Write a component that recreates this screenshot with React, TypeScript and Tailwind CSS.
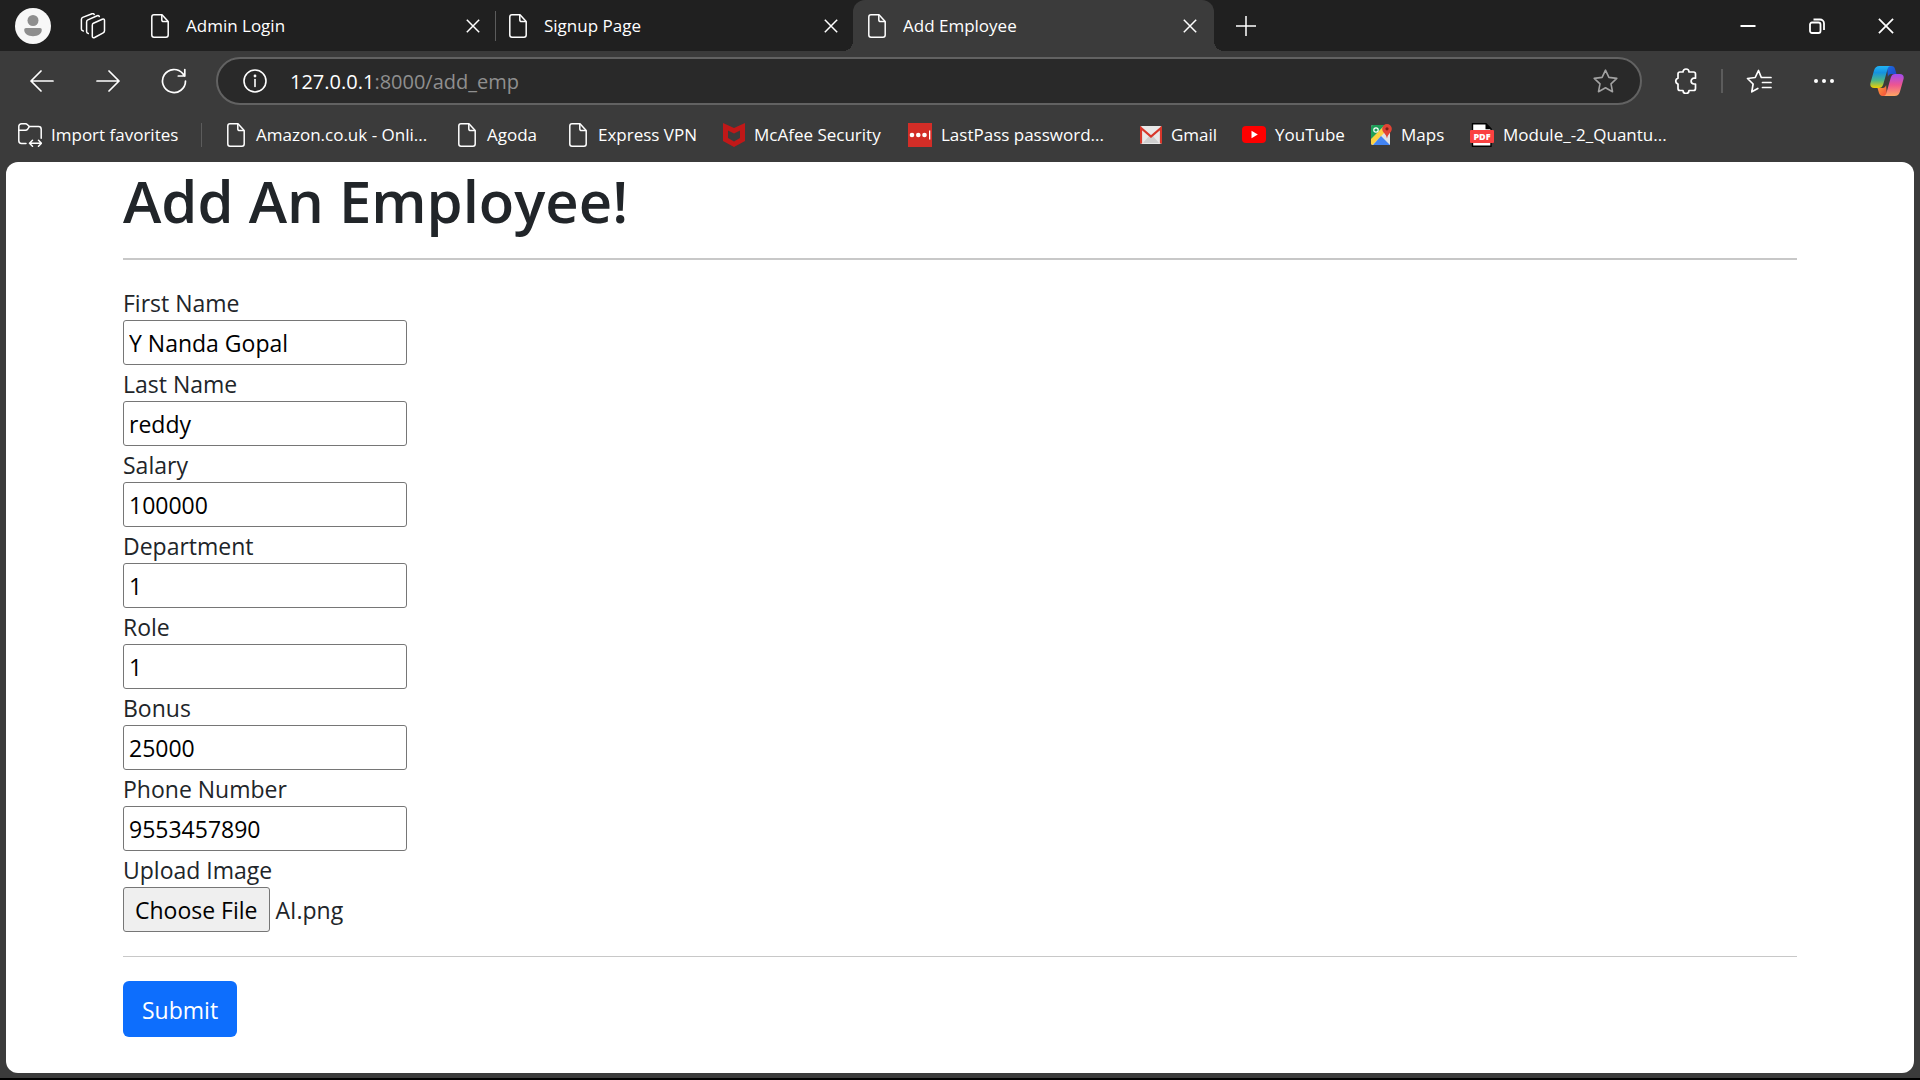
import { useEffect, useRef, useState, type ReactNode } from "react";

function PageIcon() {
  return (
    <svg width="18" height="24" viewBox="0 0 18 24" fill="none" stroke="#fff" strokeWidth="1.5" className="shrink-0" aria-hidden="true">
      <path d="M11 .8H3A2.2 2.2 0 0 0 .8 3v18A2.2 2.2 0 0 0 3 23.2h12a2.2 2.2 0 0 0 2.2-2.2V7.4z" strokeLinejoin="round" />
      <path d="M10.8 1v5a1.6 1.6 0 0 0 1.6 1.6h4.6" />
    </svg>
  );
}

function CloseIcon({ size = 14 }: { size?: number }) {
  return (
    <svg width={size} height={size} viewBox="0 0 14 14" stroke="#fff" strokeWidth="1.5" aria-hidden="true">
      <path d="M.8.8l12.4 12.4M13.2.8L.8 13.2" />
    </svg>
  );
}

function CopilotIcon() {
  return (
    <svg width="34" height="30" viewBox="0 0 34 30" aria-hidden="true">
      <defs>
        <linearGradient id="cpA" x1="0" y1="0" x2="0" y2="1">
          <stop offset="0" stopColor="#22b4f5" />
          <stop offset=".3" stopColor="#1592e0" />
          <stop offset=".65" stopColor="#4bb58a" />
          <stop offset="1" stopColor="#f2cf00" />
        </linearGradient>
        <linearGradient id="cpB" x1="0" y1="0" x2="0" y2="1">
          <stop offset="0" stopColor="#a04bf0" />
          <stop offset=".5" stopColor="#ee5590" />
          <stop offset="1" stopColor="#ffa763" />
        </linearGradient>
        <linearGradient id="cpC" x1="0" y1="0" x2="1" y2="1">
          <stop offset="0" stopColor="#1f6de0" />
          <stop offset="1" stopColor="#1a45c8" />
        </linearGradient>
        <linearGradient id="cpD" x1="0" y1="0" x2="1" y2="1">
          <stop offset="0" stopColor="#ffa03c" />
          <stop offset="1" stopColor="#f24a3a" />
        </linearGradient>
      </defs>
      <path d="M17 0h4.500c2 0 3 1.200 3.600 3.200L26.500 8h-5c-2 0-3 1-3.600 3z" fill="url(#cpC)" />
      <path d="M17 30h-4.500c-2 0-3-1.200-3.600-3.200L7.500 22h5c2 0 3-1 3.600-3z" fill="url(#cpD)" />
      <path d="M9.500 0H21c-2 0-2.800 1.200-3.400 3l-4.400 15.500C12.400 21 11 22 9 22H4.200C1 22-.4 20 .6 16.500L4 4.500C4.900 1.500 6.500 0 9.500 0z" fill="url(#cpA)" />
      <path d="M24.500 30H13c2 0 2.800-1.200 3.400-3l4.400-15.500C21.600 9 23 8 25 8h4.800c3.200 0 4.600 2 3.600 5.500L30 25.500c-.9 3-2.500 4.500-5.500 4.500z" fill="url(#cpB)" />
    </svg>
  );
}

function Tab({ title, active = false }: { title: string; active?: boolean }) {
  return (
    <div
      className={
        active
          ? "relative flex h-full w-[361px] items-center rounded-t-xl bg-[#3b3b3b] pr-4 pl-[15px]"
          : "relative flex h-full w-[357px] items-center pr-[14px] pl-[13px]"
      }
    >
      {active && (
        <>
          <span className="absolute bottom-0 -left-2.5 size-2.5 bg-[radial-gradient(circle_at_0_0,transparent_10px,#3b3b3b_10px)]" />
          <span className="absolute -right-2.5 bottom-0 size-2.5 bg-[radial-gradient(circle_at_100%_0,transparent_10px,#3b3b3b_10px)]" />
        </>
      )}
      <PageIcon />
      <span className="ml-[17px] flex-1 truncate text-[17px] leading-6">{title}</span>
      <button type="button" aria-label={`Close ${title}`} className="flex size-4 items-center justify-center">
        <CloseIcon />
      </button>
    </div>
  );
}

function Favorite({ icon, label, width }: { icon?: ReactNode; label: string; width: string }) {
  return (
    <a href="#" className={`flex h-8 shrink-0 items-center whitespace-nowrap ${width} ${icon ? "gap-[9px]" : "gap-[11px]"}`}>
      {icon ?? <PageIcon />}
      <span>{label}</span>
    </a>
  );
}

const mcafee = (
  <svg width="22" height="24" viewBox="0 0 22 24" className="shrink-0" aria-hidden="true">
    <path d="M0 0l11 5L22 0v18l-11 6-11-6zM5 7.500V15l6 3.500 6-3.500V7.500l-6 3z" fill="#c01818" fillRule="evenodd" />
  </svg>
);

const lastpass = (
  <svg width="24" height="24" viewBox="0 0 24 24" className="shrink-0" aria-hidden="true">
    <path d="M0 0h24v24H0z" fill="#d32d27" />
    <g fill="#fff">
      <circle cx="4" cy="12" r="2.300" />
      <circle cx="10.300" cy="12" r="2.300" />
      <circle cx="16.500" cy="12" r="2.300" />
      <path d="M21 7.500h1.300v9H21z" />
    </g>
  </svg>
);

const gmail = (
  <svg width="22" height="18" viewBox="0 0 22 18" className="shrink-0" aria-hidden="true">
    <rect width="22" height="18" rx="2" fill="#e8e8e8" />
    <path d="M3 17l6-7h4l6 7z" fill="#cfcfcf" />
    <path d="M1 17.500V2L11 10.500 21 2v15.500" fill="none" stroke="#d8372b" strokeWidth="2.200" />
  </svg>
);

const youtube = (
  <svg width="24" height="17" viewBox="0 0 24 17" className="shrink-0" aria-hidden="true">
    <rect width="24" height="17" rx="4" fill="#f00" />
    <path d="M9.500 4.800v7.400l6.300-3.700z" fill="#fff" />
  </svg>
);

const maps = (
  <svg width="22" height="22" viewBox="0 0 22 22" className="shrink-0" aria-hidden="true">
    <path d="M1 3a2 2 0 0 1 2-2h17v20H3a2 2 0 0 1-2-2z" fill="#dfe3e6" />
    <path d="M1 3a2 2 0 0 1 2-2h12L1 16z" fill="#1e9e58" />
    <path d="M1 15L14 2l3 4L2.500 21 1 20z" fill="#fdd041" />
    <path d="M11 12l9 9H3z" fill="#4284f3" />
    <circle cx="6" cy="6" r="2.200" fill="none" stroke="#fff" strokeWidth="1.200" />
    <path d="M17 0a4.800 4.800 0 0 1 4.800 4.800C21.800 8.500 18 9.500 17 14.500c-1-5-4.800-6-4.800-9.700A4.800 4.800 0 0 1 17 0z" fill="#e14435" />
    <circle cx="17" cy="4.800" r="1.600" fill="#7a1f17" />
  </svg>
);

const pdf = (
  <svg width="24" height="24" viewBox="0 0 24 24" className="shrink-0" aria-hidden="true">
    <path d="M2.500.7H16l5 5v17.600H2.500z" fill="#fff" stroke="#000" strokeWidth="1.400" />
    <path d="M15.500.7L21 6.200h-5.500z" fill="#000" />
    <rect y="7" width="24" height="13" rx="1" fill="#fa4141" />
    <text x="12" y="17" textAnchor="middle" fontSize="9" fontWeight="800" fontFamily="Open Sans, sans-serif" fill="#fff">PDF</text>
  </svg>
);

const fields = [
  { id: "first_name", label: "First Name", value: "Y Nanda Gopal" },
  { id: "last_name", label: "Last Name", value: "reddy" },
  { id: "salary", label: "Salary", value: "100000" },
  { id: "dept", label: "Department", value: "1" },
  { id: "role", label: "Role", value: "1" },
  { id: "bonus", label: "Bonus", value: "25000" },
  { id: "phone", label: "Phone Number", value: "9553457890" },
];

function EmployeeForm() {
  const [values, setValues] = useState(() => Object.fromEntries(fields.map((f) => [f.id, f.value])));
  const fileRef = useRef<HTMLInputElement>(null);

  useEffect(() => {
    const transfer = new DataTransfer();
    transfer.items.add(new File([""], "AI.png", { type: "image/png" }));
    if (fileRef.current) fileRef.current.files = transfer.files;
  }, []);

  return (
    <form className="text-[23px] leading-9" onSubmit={(e) => e.preventDefault()}>
      {fields.map((f) => (
        <div key={f.id} className="flex flex-col items-start">
          <label htmlFor={f.id} className="pt-0.5 leading-[34px]">
            {f.label}
          </label>
          <input
            id={f.id}
            type="text"
            value={values[f.id]}
            onChange={(e) => setValues({ ...values, [f.id]: e.target.value })}
            className="h-[45px] w-[284px] rounded-[3px] border border-[#767676] bg-white px-[5px] text-black"
          />
        </div>
      ))}
      <div className="flex flex-col items-start">
        <label htmlFor="image" className="pt-0.5 leading-[34px]">
          Upload Image
        </label>
        <input
          ref={fileRef}
          id="image"
          type="file"
          className="h-[45px] leading-9 file:mr-1.5 file:h-[45px] file:rounded-[3px] file:border file:border-solid file:border-[#767676] file:bg-[#efefef] file:px-[11px] file:text-black"
        />
      </div>
      <hr className="my-6 border-t border-[#c8c8c8]" />
      <button type="submit" className="h-14 rounded-md bg-[#0d6efd] px-[19px] pt-0.5 text-white">
        Submit
      </button>
    </form>
  );
}

export default function App() {
  return (
    <div className="flex min-h-screen flex-col border-b-2 border-black bg-[#3b3b3b] font-['Open_Sans',sans-serif] text-white">
      <header>
        <div className="flex h-[51px] items-center bg-[#202020]">
          <button type="button" aria-label="Profile" className="ml-[15px]">
            <svg width="36" height="36" viewBox="0 0 36 36" aria-hidden="true">
              <circle cx="18" cy="18" r="18" fill="#f7f7f7" />
              <circle cx="18" cy="12.500" r="5.500" fill="#8e8e8e" />
              <path d="M11 20h14a1.800 1.800 0 0 1 1.800 1.800C26.800 26 23 28.200 18 28.200S9.200 26 9.200 21.800A1.800 1.800 0 0 1 11 20z" fill="#8e8e8e" />
            </svg>
          </button>
          <button type="button" aria-label="Workspaces" className="ml-[29px]">
            <svg width="26" height="26" viewBox="0 0 26 26" fill="none" stroke="#fff" strokeWidth="1.500" strokeLinejoin="round" strokeLinecap="round" aria-hidden="true">
              <path d="M13.400 10.200l8.900-4c1.300-.5 2.200.1 2.200 1.300v10.200c0 1-.4 1.700-1.300 2.100l-8.600 4.700c-1.200.6-2.300 0-2.300-1.300V12.200c0-1 .3-1.600 1.100-2z" />
              <path d="M8.300 20.500c-1-.2-1.700-.8-1.700-1.700V9c0-1 .4-1.700 1.300-2.100l9.300-4.100c1-.4 1.900-.1 2.100.8" />
              <path d="M3.300 18c-1-.2-1.900-.8-1.900-1.700V6.500c0-1 .4-1.700 1.300-2.100l9.300-3.600c1-.4 1.900-.2 2.200.7" />
            </svg>
          </button>
          <div className="ml-8 flex h-full items-center">
            <Tab title="Admin Login" />
            <span className="h-[30px] w-px bg-[#5c5c5c]" />
            <Tab title="Signup Page" />
            <Tab title="Add Employee" active />
          </div>
          <button type="button" aria-label="New tab" className="ml-[22px]">
            <svg width="20" height="20" viewBox="0 0 20 20" stroke="#fff" strokeWidth="1.500" aria-hidden="true">
              <path d="M10 0v20M0 10h20" />
            </svg>
          </button>
          <div className="ml-auto flex items-center">
            <button type="button" aria-label="Minimize" className="flex w-[69px] justify-center">
              <svg width="16" height="16" viewBox="0 0 16 16" aria-hidden="true">
                <path d="M.5 7h15v2H.5z" fill="#fff" />
              </svg>
            </button>
            <button type="button" aria-label="Restore" className="flex w-[69px] justify-center">
              <svg width="16" height="16" viewBox="0 0 16 16" fill="none" stroke="#fff" strokeWidth="1.800" aria-hidden="true">
                <rect x="1" y="4.500" width="10.500" height="10.500" rx="2" />
                <path d="M4.500 1.500h6.500a4 4 0 0 1 4 4V12" />
              </svg>
            </button>
            <button type="button" aria-label="Close window" className="flex w-[69px] justify-center">
              <CloseIcon size={16} />
            </button>
          </div>
        </div>

        <nav className="flex h-[60px] items-center pl-[9px]" aria-label="Browser toolbar">
          <button type="button" aria-label="Back" className="flex w-[66px] justify-center">
            <svg width="24" height="22" viewBox="0 0 24 22" fill="none" stroke="#fff" strokeWidth="1.700" strokeLinecap="round" strokeLinejoin="round" aria-hidden="true">
              <path d="M11 1L1 11l10 10M1 11h22" />
            </svg>
          </button>
          <button type="button" aria-label="Forward" className="flex w-[66px] justify-center">
            <svg width="24" height="22" viewBox="0 0 24 22" fill="none" stroke="#fff" strokeWidth="1.700" strokeLinecap="round" strokeLinejoin="round" aria-hidden="true">
              <path d="M13 1l10 10-10 10M23 11H1" />
            </svg>
          </button>
          <button type="button" aria-label="Refresh" className="flex w-[66px] justify-center">
            <svg width="26" height="26" viewBox="0 0 26 26" fill="none" stroke="#fff" strokeWidth="1.700" strokeLinecap="round" strokeLinejoin="round" aria-hidden="true">
              <path d="M24.500 13A11.500 11.500 0 1 1 21.700 5.500L23.500 8M23.800 1.500V8h-6.500" />
            </svg>
          </button>
          <div className="ml-[9px] flex h-12 flex-1 items-center rounded-full border-2 border-[#626262] bg-[#292929] pr-[22px] pl-[25px]">
            <svg width="24" height="24" viewBox="0 0 24 24" fill="none" stroke="#fff" strokeWidth="1.600" aria-hidden="true">
              <circle cx="12" cy="12" r="11" />
              <path d="M12 10.500V17.500" strokeLinecap="round" />
              <circle cx="12" cy="7" r=".6" fill="#fff" />
            </svg>
            <p className="ml-[23px] flex-1 pt-0.5 text-[20px] leading-7 text-[#8f8f8f]">
              <span className="text-white">127.0.0.1</span>:8000/add_emp
            </p>
            <button type="button" aria-label="Add to favorites">
              <svg width="25" height="25" viewBox="0 0 25 25" fill="none" stroke="#a2a2a2" strokeWidth="1.600" strokeLinejoin="round" aria-hidden="true">
                <path d="M12.500 1.200l3.400 7.200 7.900 1-5.800 5.400 1.500 7.900-7-3.900-7 3.900L7 14.800 1.200 9.400l7.900-1z" />
              </svg>
            </button>
          </div>
          <button type="button" aria-label="Extensions" className="ml-2 flex w-[71px] justify-center">
            <svg width="24" height="26" viewBox="0 0 24 26" fill="none" stroke="#fff" strokeWidth="1.700" strokeLinejoin="round" aria-hidden="true">
              <path d="M9 4a3 3 0 0 1 6 0h4.500a2 2 0 0 1 2 2v4.200H20a2.900 2.900 0 0 0 0 5.800h1.500v4.500a2 2 0 0 1-2 2H15a3 3 0 0 1-6 0H6a2 2 0 0 1-2-2V16a3 3 0 0 1 0-5.800V6a2 2 0 0 1 2-2z" />
            </svg>
          </button>
          <span className="h-6 w-0.5 bg-[#5c5c5c]" />
          <button type="button" aria-label="Favorites" className="flex w-[71px] justify-center">
            <svg width="26" height="25" viewBox="0 0 26 25" fill="none" stroke="#fff" strokeWidth="1.700" strokeLinecap="round" strokeLinejoin="round" aria-hidden="true">
              <path d="M16 8.500h-.7L12.500 1.500 9.200 8.500l-7.700 1 5.600 5.500-1.300 7.800 6-3.300M16.500 8.500h8.500M16.500 13.500h8.500M16.500 18.500h8.500" />
            </svg>
          </button>
          <button type="button" aria-label="Settings and more" className="flex w-[60px] justify-center">
            <svg width="20" height="4" viewBox="0 0 20 4" fill="#fff" aria-hidden="true">
              <circle cx="2" cy="2" r="2" />
              <circle cx="10" cy="2" r="2" />
              <circle cx="18" cy="2" r="2" />
            </svg>
          </button>
          <button type="button" aria-label="Copilot" className="flex w-[66px] justify-center">
            <CopilotIcon />
          </button>
        </nav>

        <nav className="flex h-[51px] items-center pb-1 pl-[18px] text-[17px] leading-6" aria-label="Favorites bar">
          <Favorite
            width="w-[183px]"
            label="Import favorites"
            icon={
              <svg width="24" height="24" viewBox="0 0 24 24" fill="none" stroke="#fff" strokeWidth="1.500" strokeLinecap="round" strokeLinejoin="round" className="shrink-0" aria-hidden="true">
                <path d="M8 20.500H3.500A2.700 2.700 0 0 1 .8 17.800V3.500A2.700 2.700 0 0 1 3.500.8h4c.8 0 1.400.3 2 .9l1.800 1.900h9.200a2.700 2.700 0 0 1 2.700 2.700v9" />
                <path d="M.8 7.300h6.700c.8 0 1.400-.3 2-.9l1.800-2.800M12 20.200h11M14.500 17.200l-3 3 3 3M20.500 17.200l3 3-3 3" />
              </svg>
            }
          />
          <span className="h-6 w-px bg-[#5c5c5c]" />
          <div className="ml-[25px] flex">
            <Favorite width="w-[231px]" label="Amazon.co.uk - Onli..." />
            <Favorite width="w-[111px]" label="Agoda" />
            <Favorite width="w-[154px]" label="Express VPN" />
            <Favorite width="w-[185px]" label="McAfee Security" icon={mcafee} />
            <Favorite width="w-[232px]" label="LastPass password..." icon={lastpass} />
            <Favorite width="w-[102px]" label="Gmail" icon={gmail} />
            <Favorite width="w-[128px]" label="YouTube" icon={youtube} />
            <Favorite width="w-[100px]" label="Maps" icon={maps} />
            <Favorite width="w-[200px]" label="Module_-2_Quantu..." icon={pdf} />
          </div>
        </nav>
      </header>

      <main className="mx-1.5 mb-[5px] flex-1 rounded-xl bg-white px-[117px] pb-9 text-[#212529]">
        <h1 className="pt-1.5 text-[58px] leading-[66px] font-semibold">Add An Employee!</h1>
        <hr className="my-6 border-t-2 border-[#c8c8c8]" />
        <EmployeeForm />
      </main>
    </div>
  );
}
